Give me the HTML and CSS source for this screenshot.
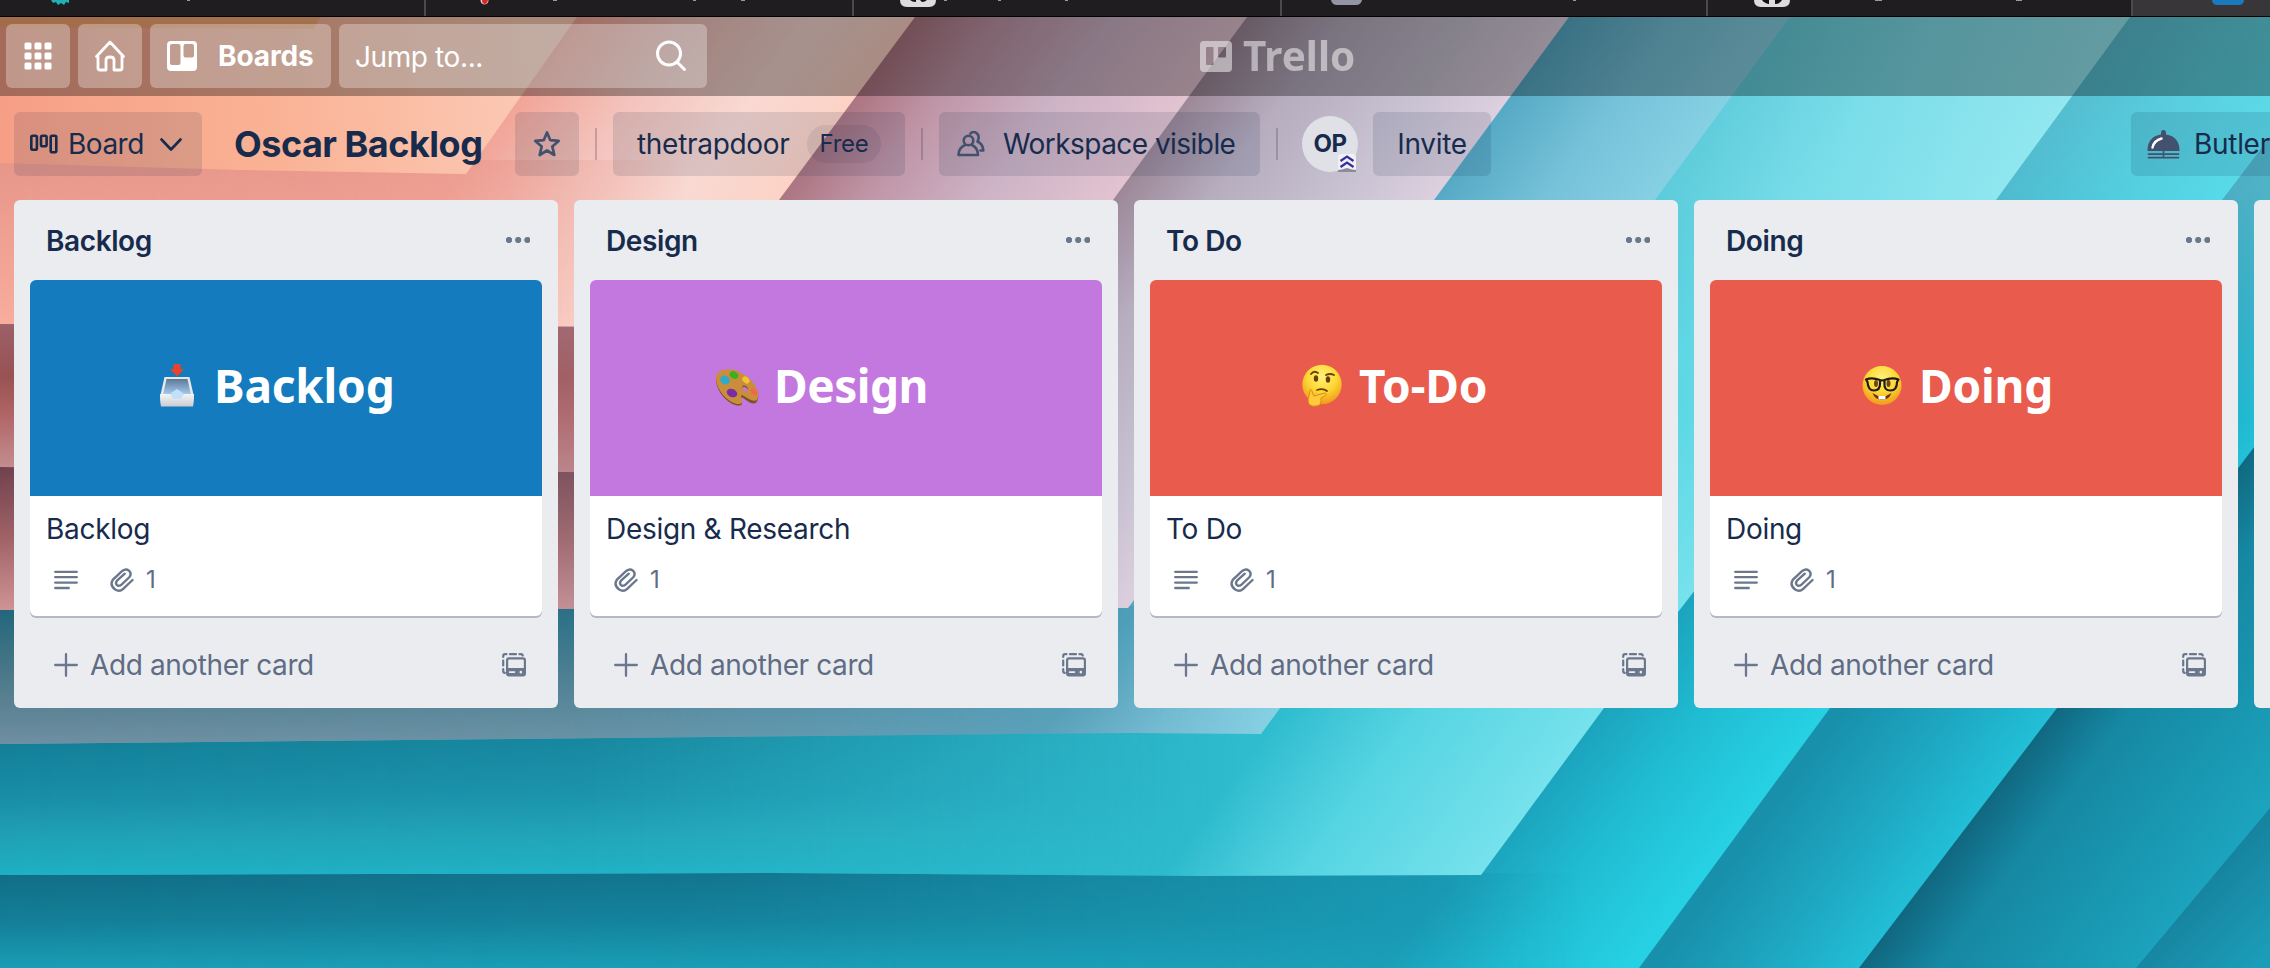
FILE: index.html
```html
<!DOCTYPE html>
<html lang="en">
<head>
<meta charset="utf-8">
<title>Oscar Backlog | Trello</title>
<link rel="stylesheet" href="styles.css">
</head>
<body>
<svg class="wallpaper" viewBox="0 0 2270 968" preserveAspectRatio="none" aria-hidden="true">
  <defs>
    <linearGradient id="fade"><stop offset="0" stop-color="#fff"/><stop offset=".45" stop-color="#fff" stop-opacity=".85"/><stop offset="1" stop-color="#fff" stop-opacity="0"/></linearGradient>
    <linearGradient id="fade2"><stop offset="0" stop-color="#fff"/><stop offset=".4" stop-color="#fff" stop-opacity=".85"/><stop offset=".85" stop-color="#fff" stop-opacity="0"/></linearGradient>
    <mask id="m" maskContentUnits="objectBoundingBox"><rect width="1" height="1" fill="url(#fade)"/></mask>
    <mask id="m2" maskContentUnits="objectBoundingBox"><rect width="1" height="1" fill="url(#fade2)"/></mask>
    <linearGradient id="d1" gradientUnits="userSpaceOnUse" x1="0" y1="100" x2="540" y2="60"><stop offset="0" stop-color="#f69f86"/><stop offset=".5" stop-color="#fab295"/><stop offset="1" stop-color="#fbcab6"/></linearGradient>
    <linearGradient id="d2" gradientUnits="userSpaceOnUse" x1="577" y1="17" x2="796" y2="178"><stop offset="0" stop-color="#f2a497"/><stop offset=".35" stop-color="#f3c4bd"/><stop offset=".7" stop-color="#f9d9d3"/><stop offset="1" stop-color="#fcd2c5"/></linearGradient>
    <linearGradient id="d3" gradientUnits="userSpaceOnUse" x1="915" y1="17" x2="1130" y2="175"><stop offset="0" stop-color="#ac7582"/><stop offset=".25" stop-color="#bf95a6"/><stop offset=".6" stop-color="#cdb3c6"/><stop offset="1" stop-color="#e2c3d0"/></linearGradient>
    <linearGradient id="d4" gradientUnits="userSpaceOnUse" x1="1247" y1="17" x2="1456" y2="171"><stop offset="0" stop-color="#9c8797"/><stop offset=".3" stop-color="#b6adbf"/><stop offset=".7" stop-color="#c8c2d2"/><stop offset="1" stop-color="#ddd0df"/></linearGradient>
    <linearGradient id="d5" gradientUnits="userSpaceOnUse" x1="1569" y1="17" x2="1712" y2="122"><stop offset="0" stop-color="#56a9c5"/><stop offset=".5" stop-color="#76c2d9"/><stop offset="1" stop-color="#86d0e3"/></linearGradient>
    <linearGradient id="d6" gradientUnits="userSpaceOnUse" x1="1790" y1="17" x2="2011" y2="179"><stop offset="0" stop-color="#2fbccf"/><stop offset=".4" stop-color="#55d4e2"/><stop offset="1" stop-color="#79e3ed"/></linearGradient>
    <linearGradient id="d7" gradientUnits="userSpaceOnUse" x1="2120" y1="17" x2="2275" y2="137"><stop offset="0" stop-color="#1b9fba"/><stop offset=".5" stop-color="#20bdd2"/><stop offset="1" stop-color="#27d1e4"/></linearGradient>
    <linearGradient id="d8" gradientUnits="userSpaceOnUse" x1="2357" y1="17" x2="2495" y2="119"><stop offset="0" stop-color="#1890ac"/><stop offset=".5" stop-color="#1ea6c0"/><stop offset="1" stop-color="#22c0d8"/></linearGradient>
    <linearGradient id="d9" gradientUnits="userSpaceOnUse" x1="2565" y1="17" x2="2756" y2="160"><stop offset="0" stop-color="#10647c"/><stop offset=".28" stop-color="#1688a3"/><stop offset="1" stop-color="#1ca4be"/></linearGradient>
    <linearGradient id="b2" x2="0" y2="1"><stop offset="0" stop-color="#e7968a"/><stop offset="1" stop-color="#f8ad9d"/></linearGradient>
    <linearGradient id="b3" x2="0" y2="1"><stop offset="0" stop-color="#9c6169"/><stop offset=".35" stop-color="#995252"/><stop offset=".6" stop-color="#b06464"/><stop offset="1" stop-color="#c79494"/></linearGradient>
    <linearGradient id="b4" x2="0" y2="1"><stop offset="0" stop-color="#70404d"/><stop offset=".5" stop-color="#a06266"/><stop offset="1" stop-color="#cf9396"/></linearGradient>
    <linearGradient id="b5" x2="0" y2="1"><stop offset="0" stop-color="#20657b"/><stop offset=".5" stop-color="#4b7888"/><stop offset="1" stop-color="#6f8fa1"/></linearGradient>
    <linearGradient id="b6" x2="0" y2="1"><stop offset="0" stop-color="#137c94"/><stop offset=".45" stop-color="#188da6"/><stop offset=".7" stop-color="#209fb3"/><stop offset="1" stop-color="#1eb0c4"/></linearGradient>
    <linearGradient id="b7" x2="0" y2="1"><stop offset="0" stop-color="#116d86"/><stop offset=".5" stop-color="#147e97"/><stop offset="1" stop-color="#1a9db6"/></linearGradient>
    <linearGradient id="haze" x2="0" y2="1"><stop offset="0" stop-color="#bfeef5" stop-opacity=".4"/><stop offset=".45" stop-color="#bfeef5" stop-opacity=".32"/><stop offset="1" stop-color="#bfeef5" stop-opacity="0"/></linearGradient>
    <linearGradient id="d10" gradientUnits="userSpaceOnUse" x1="2160" y1="880" x2="2250" y2="968"><stop offset="0" stop-color="#157b97"/><stop offset="1" stop-color="#1b9cb8"/></linearGradient>
  </defs>
  <rect width="2270" height="968" fill="url(#d10)"/>
  <path d="M0 0H2270V808L2136 968H0Z" fill="url(#d9)"/>
  <path d="M0 0H2270V426L2057 708L1859 968H0Z" fill="url(#d8)"/>
  <path d="M0 0H2270V137L2222 200L1830 708L1639 968H0Z" fill="url(#d7)"/>
  <rect y="873" width="1580" height="95" fill="url(#b7)" mask="url(#m)"/>
  <path d="M0 0H2143L2130 17L1996 200L1604 708L1481 875L1200 876L780 873L0 875Z" fill="url(#d6)"/>
  <path d="M0 732H1460V875L1200 876L780 873L0 875Z" fill="url(#b6)" mask="url(#m2)"/>
  <path d="M0 0H2270V420H1500Z" fill="url(#haze)"/>
  <path d="M0 0H1802L1790 17L1655 200L1261 734L1130 733L0 744Z" fill="url(#d5)"/>
  <path d="M0 606H1261V734L1130 733L0 744Z" fill="url(#b5)" mask="url(#m)"/>
  <path d="M0 0H1581L1569 17L1434 200L1128 608L0 610Z" fill="url(#d4)"/>
  <path d="M0 466H1128V608L0 610Z" fill="url(#b4)" mask="url(#m)"/>
  <path d="M0 0H1259L1247 17L1113 200L912 475L0 467Z" fill="url(#d3)"/>
  <path d="M0 323H912V475L0 467Z" fill="url(#b3)" mask="url(#m)"/>
  <path d="M0 0H927L915 17L779 200L686 327L0 324Z" fill="url(#d2)"/>
  <path d="M0 160H686V327L0 324Z" fill="url(#b2)" mask="url(#m)"/>
  <path d="M0 0H589L577 17L466 174L240 170L0 163Z" fill="url(#d1)"/>
  <path d="M0 0H332L313 29L0 27Z" fill="#f1a265" opacity=".7"/>
</svg>

<div class="tabs">
  <div class="tab tab-a"><svg width="426" height="16"><path d="M51 0h18v3l-3-1-2 3-3-2-3 2-2-3-3 1z" fill="#1fb0b5"/><path d="M187 0h3v1h-3z" fill="#999"/></svg></div>
  <div class="tab tab-b"><svg width="426" height="16"><path d="M54.500 0h8q0 4-4 4.500-4-.5-4-4.500z" fill="#f3c9c9"/><path d="M56 0h6q-1 4-3 4-3 0-3-4z" fill="#d12b2b"/><path d="M127 0h4v1h-4zM267 0h3v1h-3zM315 0h4v1h-4z" fill="#999"/></svg></div>
  <div class="tab tab-b"><svg width="426" height="16"><path d="M46 0h36q0 7-7 7H53q-7 0-7-7z" fill="#ddd"/><path d="M56 0h6v2q-4 0-6-2zM66 0h7q-2 2-5 2z" fill="#111"/><path d="M90 0h3v1h-3zM144 0h3v1h-3zM211 0h3v1h-3z" fill="#999"/></svg></div>
  <div class="tab tab-a"><svg width="424" height="16"><path d="M49 0h31q-1 5-6 5H55q-5 0-6-5z" fill="#9295a3"/><path d="M291 0h3v1h-3z" fill="#999"/></svg></div>
  <div class="tab tab-c"><svg width="423" height="16"><path d="M46 0h36q0 7-7 7H53q-7 0-7-7z" fill="#ddd"/><path d="M54 0h7v4q-5-1-7-4zM67 0h7q-2 4-7 4z" fill="#111"/><path d="M167 0h7v1h-7zM308 0h6v1h-6z" fill="#999"/></svg></div>
  <div class="tab tab-active"><svg width="137" height="16"><path d="M79 0h32q0 5-6 5H85q-6 0-6-5z" fill="#1b79bf"/></svg></div>
</div>

<header class="topbar">
  <a class="tbtn sq"><svg width="28" height="28" viewBox="0 0 28 28" fill="#fff"><rect x="0.500" y=".5" width="7" height="7" rx="1.500"/><rect x="10.500" y=".5" width="7" height="7" rx="1.500"/><rect x="20.500" y=".5" width="7" height="7" rx="1.500"/><rect x=".5" y="10.500" width="7" height="7" rx="1.500"/><rect x="10.500" y="10.500" width="7" height="7" rx="1.500"/><rect x="20.500" y="10.500" width="7" height="7" rx="1.500"/><rect x=".5" y="20.500" width="7" height="7" rx="1.500"/><rect x="10.500" y="20.500" width="7" height="7" rx="1.500"/><rect x="20.500" y="20.500" width="7" height="7" rx="1.500"/></svg></a>
  <a class="tbtn sq"><svg width="32" height="32" viewBox="0 0 32 32" fill="none" stroke="#fff" stroke-width="2.800" stroke-linejoin="round"><path d="M16 2L2.500 16.500H4V28q0 2 2 2h6V20q0-3 4-3t4 3v10h6q2 0 2-2V16.500h1.500Z"/></svg></a>
  <a class="tbtn boards"><svg width="30" height="30" viewBox="0 0 30 30"><path fill="#fff" fill-rule="evenodd" d="M4 0H26Q30 0 30 4V26Q30 30 26 30H4Q0 30 0 26V4Q0 0 4 0ZM5 3Q3 3 3 5V22Q3 24 5 24H11.500Q13.500 24 13.500 22V5Q13.500 3 11.500 3ZM18.500 3Q16.500 3 16.500 5V14.500Q16.500 16.500 18.500 16.500H25Q27 16.500 27 14.500V5Q27 3 25 3Z"/></svg><span>Boards</span></a>
  <div class="search"><span>Jump to...</span><svg width="32" height="32" viewBox="0 0 32 32" fill="none" stroke="#fff" stroke-width="3" stroke-linecap="round"><circle cx="14" cy="13.500" r="11.500"/><path d="M22.500 22.500L29.500 29.500"/></svg></div>
  <div class="logo"><svg width="32" height="31" viewBox="0 0 32 31"><path fill="#fff" fill-rule="evenodd" d="M4 0H28Q32 0 32 4V27Q32 31 28 31H4Q0 31 0 27V4Q0 0 4 0ZM7 6Q6 6 6 7V23Q6 24 7 24H12.500Q13.500 24 13.500 23V7Q13.500 6 12.500 6ZM19 6Q18 6 18 7V15.500Q18 16.500 19 16.500H25Q26 16.500 26 15.500V7Q26 6 25 6Z"/></svg><span>Trello</span></div>
</header>

<div class="boardbar">
  <a class="bbtn view"><svg width="28" height="20" viewBox="0 0 28 20" fill="none" stroke="#172b4d" stroke-width="2.600"><rect x="1.300" y="1.800" width="5.600" height="14" rx="1.500"/><rect x="11" y="1.800" width="5.600" height="10.500" rx="1.500"/><rect x="20.700" y="1.800" width="5.600" height="16.500" rx="1.500"/></svg><span>Board</span><svg class="chev" width="22" height="13" viewBox="0 0 22 13" fill="none" stroke="#172b4d" stroke-width="2.600" stroke-linecap="round" stroke-linejoin="round"><path d="M1.500 1.500L11 11.500L20.500 1.500"/></svg></a>
  <h1>Oscar Backlog</h1>
  <a class="bbtn star"><svg width="28" height="28" viewBox="0 0 28 28" fill="none" stroke="#42526e" stroke-width="2.700" stroke-linejoin="round"><path d="M14 2.500L17.300 10.200L25.700 10.900L19.300 16.400L21.300 25L14 20.500L6.700 25L8.700 16.400L2.300 10.900L10.700 10.200Z"/></svg></a>
  <i class="div"></i>
  <a class="bbtn team"><span>thetrapdoor</span><b class="pill">Free</b></a>
  <i class="div"></i>
  <a class="bbtn vis"><svg width="28" height="26" viewBox="0 0 28 26" fill="none" stroke="#42526e" stroke-width="2.600" stroke-linecap="round" stroke-linejoin="round"><circle cx="11.500" cy="9.500" r="4.800"/><path d="M8 14Q1.500 17 1.500 24H21Q21 17 15 14M13.500 2.500Q17-.5 20 2.500T20.500 10.500Q26 13 26.300 19.500H23.500"/></svg><span>Workspace visible</span></a>
  <i class="div"></i>
  <div class="avatar">OP<svg class="rank" width="18" height="18" viewBox="0 0 18 18"><path d="M0 3Q0 0 3 0H15Q18 0 18 3V18H0Z" fill="#f0f0f5"/><path d="M2.500 7L9 2.500L15.500 7M2.500 13L9 8.500L15.500 13" fill="none" stroke="#352f9e" stroke-width="2.200"/><path d="M0 18V16L4 15.500L9 14L14 15.500L18 16V18Z" fill="#8a8c96"/></svg></div>
  <a class="bbtn invite"><span>Invite</span></a>
  <a class="bbtn butler"><svg width="33" height="29" viewBox="0 0 33 29"><path d="M.5 21Q.5 6.500 14 4.500Q13.500 0 16.500 0T19 4.500Q32.500 6.500 32.500 21Z" fill="#42526e"/><path d="M5.500 17.500Q7 10.500 14.500 8.500" fill="none" stroke="#fff" stroke-width="2.400" stroke-linecap="round"/><path d="M16.500 21V26M1.500 24.200H31.500M1.500 27.600H31.500" stroke="#42526e" stroke-width="1.700" stroke-linecap="round"/></svg><span>Butler</span></a>
</div>

<svg class="symbols" aria-hidden="true">
  <symbol id="dots" viewBox="0 0 24 6"><circle cx="3" cy="3" r="2.700"/><circle cx="12.200" cy="3" r="2.700"/><circle cx="21.400" cy="3" r="2.700"/></symbol>
  <symbol id="desc" viewBox="0 0 24 20"><path d="M1.200 1.800H22.800M1.200 7.200H22.800M1.200 12.600H22.800M1.200 18H14.800" stroke-width="2.300" stroke-linecap="round"/></symbol>
  <symbol id="clip" viewBox="0 0 24 24"><path d="M22.500 12L13.200 20.800Q9.500 24.200 5.200 21.500Q-.8 17 3 11.500L12.500 2.700Q16 .2 19 2.600Q22 5.800 19.500 9L11 17Q8.500 18.600 6.700 16.800Q5.200 14.700 7 12.700L14.800 5.700" fill="none" stroke-width="2.400" stroke-linecap="round"/></symbol>
  <symbol id="plus" viewBox="0 0 24 24"><path d="M12 1.200V22.800M1.200 12H22.800" stroke-width="2.300" stroke-linecap="round"/></symbol>
  <symbol id="tmpl" viewBox="0 0 24 24"><path d="M1.200 4V3Q1.200 1.200 3 1.200H4.500M8 1.200H14M17.500 1.200H19Q20.500 1.200 20.800 2.400M1.200 7.500V12.500M1.200 16V18Q1.200 19.800 2.800 19.900" fill="none" stroke-width="2.200" stroke-linecap="round"/><path fill-rule="evenodd" stroke="none" d="M7 4.200H21Q24 4.200 24 7.200V20.500Q24 23.500 21 23.500H7Q4 23.500 4 20.500V7.200Q4 4.200 7 4.200ZM7.200 6.400Q6.200 6.400 6.200 7.400V15H21.800V7.400Q21.800 6.400 20.800 6.400ZM7.500 18.200Q6.800 18.200 6.800 19T7.500 20H12.500Q13.200 20 13.200 19T12.500 18.200ZM18.800 17.800A1.300 1.300 0 1 0 18.900 20.400A1.300 1.300 0 1 0 18.800 17.800Z"/></symbol>
</svg>

<main class="lists">
  <section class="list">
    <div class="lhead"><h2>Backlog</h2><svg class="ic" width="24" height="6"><use href="#dots"/></svg></div>
    <article class="card">
      <div class="cover blue"><svg width="44" height="44" viewBox="0 0 44 44"><defs><linearGradient id="tray" x2="0" y2="1"><stop offset="0" stop-color="#5c7998"/><stop offset="1" stop-color="#a9cdf0"/></linearGradient><linearGradient id="tf" x2="0" y2="1"><stop offset="0" stop-color="#f4f5f7"/><stop offset="1" stop-color="#c9ccd1"/></linearGradient></defs><path d="M9.500 14H34.500L39 34L38 43H6L5 34Z" fill="#e6e8eb"/><path d="M11.500 16H32.500L36 32H8Z" fill="url(#tray)"/><path d="M16 30L22 26L28 30V36H16Z" fill="#c3e0fa"/><path d="M5 31H15.500Q17 36.500 22 36.500T28.500 31H39L38 43.500H6Z" fill="url(#tf)"/><path d="M18.500 1H25.500V6H29L22 13.500L15 6H18.500Z" fill="#e8432c"/></svg><span>Backlog</span></div>
      <p>Backlog</p>
      <div class="badges"><svg class="ic" width="24" height="20"><use href="#desc"/></svg><svg class="ic" width="24" height="24"><use href="#clip"/></svg><em>1</em></div>
    </article>
    <div class="add"><svg class="ic" width="24" height="24"><use href="#plus"/></svg><span>Add another card</span><svg class="ic" width="24" height="24"><use href="#tmpl"/></svg></div>
  </section>
  <section class="list">
    <div class="lhead"><h2>Design</h2><svg class="ic" width="24" height="6"><use href="#dots"/></svg></div>
    <article class="card">
      <div class="cover purple"><svg width="44" height="44" viewBox="0 0 44 44"><path fill="#7c5325" fill-rule="evenodd" transform="translate(0 1.500)" d="M1 15C1 5 17 3 30 12C40 19 46 30 42 37C38 43 30 34 27 33C24 33 30 40 25 41C15 42 1 28 1 15ZM27.500 24C27.500 29 33 30 33 26.500C33 23 27.500 21 27.500 24Z"/><path fill="#c98d3b" fill-rule="evenodd" d="M1 15C1 5 17 3 30 12C40 19 46 30 42 37C38 40 30 33 27 32C24 33 30 40 25 41C15 42 1 28 1 15ZM27.500 24C27.500 29 33 30 33 26.500C33 23 27.500 21 27.500 24Z"/><ellipse cx="10" cy="17" rx="5" ry="4.300" transform="rotate(35 10 17)" fill="#2fa9cc"/><ellipse cx="19" cy="12" rx="4.500" ry="3.500" transform="rotate(30 19 12)" fill="#37b21c"/><ellipse cx="31" cy="17" rx="4" ry="3" transform="rotate(45 31 17)" fill="#f2c530"/><ellipse cx="39" cy="29" rx="4" ry="2.500" transform="rotate(45 39 29)" fill="#f3654d"/><ellipse cx="17" cy="30" rx="5.500" ry="4" transform="rotate(25 17 30)" fill="#7a2ca5"/></svg><span>Design</span></div>
      <p>Design &amp; Research</p>
      <div class="badges"><svg class="ic" width="24" height="24"><use href="#clip"/></svg><em>1</em></div>
    </article>
    <div class="add"><svg class="ic" width="24" height="24"><use href="#plus"/></svg><span>Add another card</span><svg class="ic" width="24" height="24"><use href="#tmpl"/></svg></div>
  </section>
  <section class="list">
    <div class="lhead"><h2>To Do</h2><svg class="ic" width="24" height="6"><use href="#dots"/></svg></div>
    <article class="card">
      <div class="cover red"><svg width="44" height="44" viewBox="0 0 44 44"><defs><radialGradient id="face" cx=".5" cy=".3" r=".75"><stop offset="0" stop-color="#fff27a"/><stop offset=".5" stop-color="#fdd835"/><stop offset="1" stop-color="#ee8f17"/></radialGradient></defs><circle cx="22" cy="21.500" r="19.700" fill="url(#face)"/><ellipse cx="16" cy="15.500" rx="2.200" ry="3.200" fill="#6b3c0b"/><ellipse cx="28" cy="16.500" rx="2.200" ry="3.200" fill="#6b3c0b"/><path d="M11 11Q14 7 18 10M26 12Q30 10 34 12M17 27Q23 25 27 28" fill="none" stroke="#6b3c0b" stroke-width="1.800" stroke-linecap="round"/><path d="M10 28Q11 24 12.500 30L14 33L25 30Q28 31 25 33L21 35Q22 43 16 43Q8 44 8 37Z" fill="#ffcb3c" stroke="#dd8a14" stroke-width="1"/></svg><span>To-Do</span></div>
      <p>To Do</p>
      <div class="badges"><svg class="ic" width="24" height="20"><use href="#desc"/></svg><svg class="ic" width="24" height="24"><use href="#clip"/></svg><em>1</em></div>
    </article>
    <div class="add"><svg class="ic" width="24" height="24"><use href="#plus"/></svg><span>Add another card</span><svg class="ic" width="24" height="24"><use href="#tmpl"/></svg></div>
  </section>
  <section class="list">
    <div class="lhead"><h2>Doing</h2><svg class="ic" width="24" height="6"><use href="#dots"/></svg></div>
    <article class="card">
      <div class="cover red"><svg width="44" height="44" viewBox="0 0 44 44"><circle cx="22" cy="22.500" r="19.500" fill="url(#face)"/><ellipse cx="16" cy="20.500" rx="2" ry="3.500" fill="#7a430b"/><ellipse cx="28.500" cy="20.500" rx="2" ry="3.500" fill="#7a430b"/><path d="M6 16.500Q12 14 20 17V21Q20 27.500 14 27.500T7.500 19ZM24.500 17Q32 14 38.500 16.500L37 19Q37 27.500 30.500 27.500T24.500 21ZM20 18Q22 16.500 24.500 18" fill="none" stroke="#1c1c1c" stroke-width="2.200" stroke-linejoin="round"/><path d="M12.500 30Q22 37 31.500 30Q29 37 22 37T12.500 30Z" fill="#6b3309"/><path d="M18.500 33H25.500V36.500H18.500Z" fill="#fff"/></svg><span>Doing</span></div>
      <p>Doing</p>
      <div class="badges"><svg class="ic" width="24" height="20"><use href="#desc"/></svg><svg class="ic" width="24" height="24"><use href="#clip"/></svg><em>1</em></div>
    </article>
    <div class="add"><svg class="ic" width="24" height="24"><use href="#plus"/></svg><span>Add another card</span><svg class="ic" width="24" height="24"><use href="#tmpl"/></svg></div>
  </section>
  <section class="list list-cut"></section>
</main>
</body>
</html>
```
FILE: styles.css
```css
* { box-sizing: border-box; }
body {
  margin: 0;
  width: 2270px;
  height: 968px;
  overflow: hidden;
  font: 28px/40px Inter, "Liberation Sans", sans-serif;
  color: #172b4d;
  display: flex;
  flex-direction: column;
  position: relative;
}
svg { display: block; flex: none; }
span, h1, h2, p { white-space: nowrap; }
.wallpaper { position: absolute; inset: 0; width: 100%; height: 100%; z-index: -1; }
.symbols { display: none; }

.tabs { display: flex; flex: none; height: 17px; background: #201d20; border-bottom: 1px solid #000; }
.tab { border-right: 2px solid #4b494b; overflow: hidden; flex: none; }
.tab-a { width: 426px; }
.tab-b { width: 428px; }
.tab-c { width: 425px; }
.tab-active { flex: 1; background: #39363a; border: 0; }

.topbar { display: flex; flex: none; height: 79px; padding: 7px 6px 8px; gap: 8px; background: rgba(0,0,0,.33); color: #fff; }
.tbtn, .search { display: flex; align-items: center; height: 64px; border-radius: 6px; background: rgba(255,255,255,.3); }
.sq { width: 64px; justify-content: center; }
.boards { width: 181px; padding-left: 17px; gap: 21px; font-weight: 700; letter-spacing: -.1px; }
.search { width: 368px; padding: 0 20px 0 16px; justify-content: space-between; letter-spacing: -.4px; }
.search span { padding-top: 2px; }
.logo { display: flex; align-items: center; gap: 11px; margin-left: 485px; opacity: .5; font: 700 40.5px/64px "Noto Sans", sans-serif; }

.boardbar { display: flex; flex: none; height: 104px; padding: 16px 0 24px 14px; align-items: center; overflow: hidden; }
.bbtn { display: flex; flex: none; align-items: center; height: 64px; border-radius: 6px; background: rgba(9,30,66,.12); }
.view { width: 188px; padding-left: 16px; letter-spacing: -.5px; }
.view span { width: 76px; margin-left: 10px; }
.chev { margin-left: 16px; }
h1 { flex: none; margin: 0 0 0 32px; width: 281px; font-size: 36px; line-height: 60px; font-weight: 700; letter-spacing: -.5px; }
.star { width: 64px; justify-content: center; }
.div { flex: none; width: 2px; height: 32px; margin: 0 16px; background: rgba(60,50,70,.25); }
.team { width: 292px; padding-left: 24px; letter-spacing: -.3px; }
.team span { width: 170px; }
.pill { width: 74px; height: 38px; border-radius: 19px; background: rgba(9,30,66,.08); font-size: 24px; line-height: 38px; font-weight: 400; text-align: center; }
.vis { width: 321px; padding-left: 18px; gap: 18px; letter-spacing: -.55px; }
.avatar { position: relative; flex: none; width: 56px; height: 56px; margin-left: 8px; border-radius: 50%; background: #dfe1e6; font-size: 24px; line-height: 56px; font-weight: 700; text-align: center; letter-spacing: -.4px; }
.rank { position: absolute; right: 2px; bottom: 0; }
.invite { width: 118px; margin-left: 15px; justify-content: center; letter-spacing: -.3px; }
.butler { width: 139px; margin-left: 640px; padding-left: 16px; gap: 14px; border-radius: 6px 0 0 6px; letter-spacing: -.3px; overflow: hidden; }

.lists { display: flex; gap: 16px; padding-left: 14px; }
.list { flex: none; width: 544px; height: 508px; padding: 0 16px; border-radius: 6px; background: #ebecf0; }
.list-cut { flex: 1; width: auto; padding: 0; border-radius: 6px 0 0 6px; }
.lhead { display: flex; height: 80px; padding: 0 12px 0 16px; align-items: center; justify-content: space-between; }
h2 { margin: 1px 0 0; font-size: 28px; line-height: 40px; font-weight: 600; letter-spacing: -.4px; }
.ic { fill: #6b778c; stroke: #6b778c; }
.card { height: 336px; border-radius: 6px; background: #fff; box-shadow: 0 2px 0 #b2b8c5; overflow: hidden; }
.cover { display: flex; align-items: center; gap: 15px; height: 216px; padding: 0 0 7px 125px; color: #fff; font: 700 46px/60px "Noto Sans", sans-serif; letter-spacing: -.2px; }
.cover.blue { background: #147bbe; }
.cover.purple { background: #c278de; letter-spacing: -.5px; }
.cover.red { background: #e95b4c; padding-left: 150px; }
p { margin: 13px 0 0 16px; letter-spacing: -.3px; }
.badges { display: flex; align-items: center; height: 32px; margin-top: 15px; padding-left: 24px; color: #5e6c84; }
.badges svg + svg { margin-left: 32px; }
em { margin-left: 12px; font-style: normal; font-size: 24px; line-height: 32px; }
.add { display: flex; align-items: center; height: 64px; margin-top: 17px; padding: 0 16px 0 24px; color: #5e6c84; letter-spacing: -.4px; }
.add span { flex: 1; margin-left: 12px; }
```
